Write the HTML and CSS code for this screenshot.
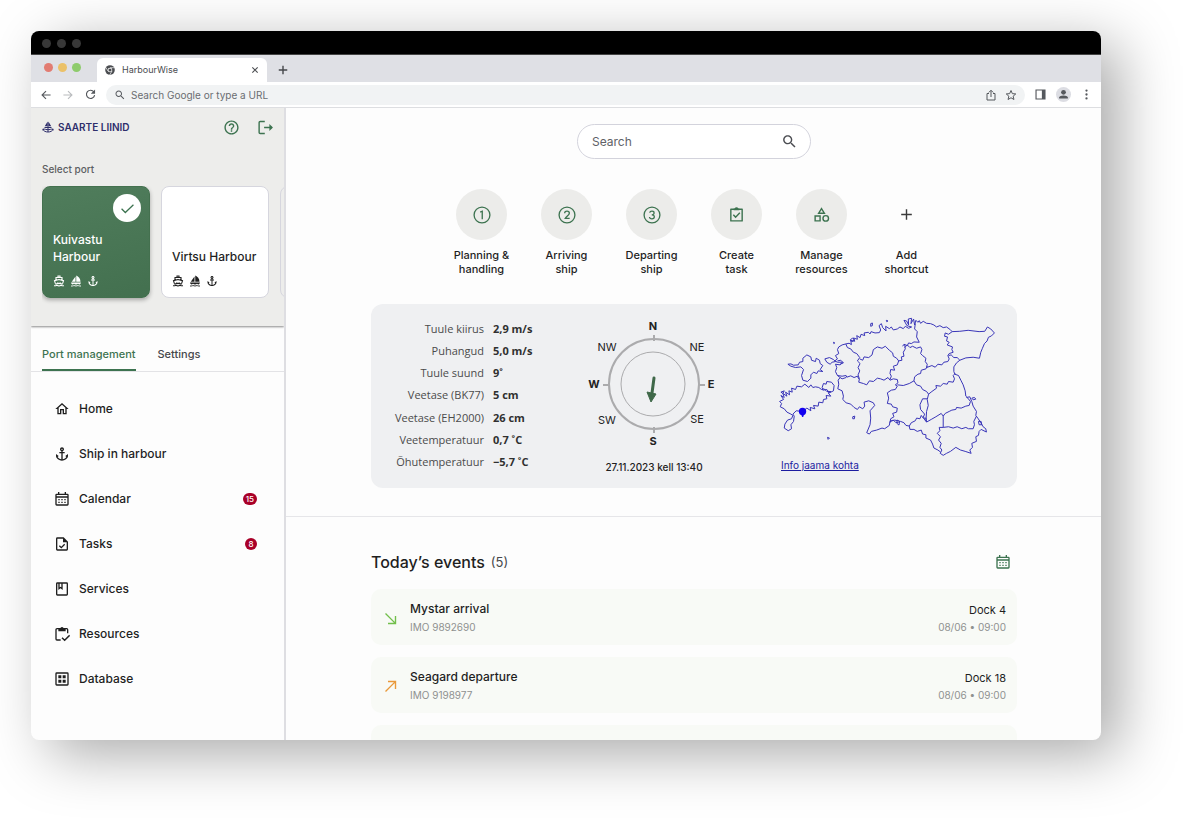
FILE: index.html
```html
<!DOCTYPE html>
<html lang="en">
<head>
<meta charset="utf-8">
<title>HarbourWise</title>
<link rel="stylesheet" href="styles.css">
</head>
<body>
<svg class="sprite" aria-hidden="true">
  <symbol id="i-home" viewBox="0 0 24 24"><path d="M12 5.69l5 4.5V18h-2v-6H9v6H7v-7.81l5-4.5M12 3L2 12h3v8h6v-6h2v6h6v-8h3L12 3z"/></symbol>
  <symbol id="i-anchor" viewBox="0 0 24 24"><path d="M17 15l1.55 1.55c-.96 1.69-3.33 3.04-5.55 3.37V11h3V9h-3V7.82C14.16 7.4 15 6.3 15 5c0-1.65-1.35-3-3-3S9 3.35 9 5c0 1.3.84 2.4 2 2.82V9H8v2h3v8.92c-2.22-.33-4.59-1.68-5.55-3.37L7 15l-4-3v3c0 3.88 4.92 7 9 7s9-3.12 9-7v-3l-4 3zM12 4c.55 0 1 .45 1 1s-.45 1-1 1-1-.45-1-1 .45-1 1-1z"/></symbol>
  <symbol id="i-calendar" viewBox="0 0 24 24"><path fill-rule="evenodd" d="M4 4h2V1.500h2V4h8V1.500h2V4h2a2 2 0 0 1 2 2v14a2 2 0 0 1-2 2H4a2 2 0 0 1-2-2V6a2 2 0 0 1 2-2zm0 6v10h16V10zm0-2.200h16V6H4zM6.500 12h2v2h-2zm4.500 0h2v2h-2zm4.500 0h2v2h-2zm-9 4h2v2h-2zm4.500 0h2v2h-2zm4.500 0h2v2h-2z"/></symbol>
  <symbol id="i-task" viewBox="0 0 24 24"><path fill-rule="evenodd" d="M14.500 2H5a2 2 0 0 0-2 2v16a2 2 0 0 0 2 2h14a2 2 0 0 0 2-2V8.500zm4.500 18H5V4h8.500v5.500H19z"/><path d="M8 14.500l3 3 5-5" fill="none" stroke="currentColor" stroke-width="2"/></symbol>
  <symbol id="i-book" viewBox="0 0 24 24"><path fill-rule="evenodd" d="M19 2H5a2 2 0 0 0-2 2v16a2 2 0 0 0 2 2h14a2 2 0 0 0 2-2V4a2 2 0 0 0-2-2zM5 4h1.500v9.500l3.250-2.500L13 13.500V4h6v16H5zm3.500 0H11v5.500L9.750 8.500 8.500 9.500z"/></symbol>
  <symbol id="i-resources" viewBox="0 0 24 24"><path d="M20.500 11V5.500a1.500 1.500 0 0 0-1.500-1.500H4.500A1.500 1.500 0 0 0 3 5.500v14A1.500 1.500 0 0 0 4.500 21H10" fill="none" stroke="currentColor" stroke-width="2"/><path d="M6.500 4h3a2.500 2.500 0 0 1 5 0h3v4h-11z"/><path d="M12 17.500l4 4 7.500-7.500" fill="none" stroke="currentColor" stroke-width="2.200"/></symbol>
  <symbol id="i-database" viewBox="0 0 24 24"><path fill-rule="evenodd" d="M4 2h16a2 2 0 0 1 2 2v16a2 2 0 0 1-2 2H4a2 2 0 0 1-2-2V4a2 2 0 0 1 2-2zm0 2v16h16V4zM6.500 6.500h4.500v4.500H6.500zm6.500 0h4.500v4.500H13zm-6.500 6.500h4.500v4.500H6.500zm6.500 0h4.500v4.500H13z"/></symbol>
  <symbol id="i-search" viewBox="0 0 24 24"><path d="M15.500 14h-.790l-.280-.270C15.410 12.590 16 11.110 16 9.500 16 5.910 13.090 3 9.500 3S3 5.910 3 9.500 5.910 16 9.500 16c1.610 0 3.090-.590 4.230-1.570l.270.280v.790l5 4.990L20.490 19l-4.990-5zm-6 0C7.010 14 5 11.990 5 9.500S7.010 5 9.500 5 14 7.010 14 9.500 11.990 14 9.500 14z"/></symbol>
  <symbol id="i-help" viewBox="0 0 24 24"><path d="M11 18h2v-2h-2v2zm1-16C6.480 2 2 6.480 2 12s4.480 10 10 10 10-4.480 10-10S17.520 2 12 2zm0 18c-4.410 0-8-3.590-8-8s3.590-8 8-8 8 3.590 8 8-3.590 8-8 8zm0-14c-2.210 0-4 1.790-4 4h2c0-1.100.9-2 2-2s2 .9 2 2c0 2-3 1.750-3 5h2c0-2.250 3-2.500 3-5 0-2.210-1.790-4-4-4z"/></symbol>
  <symbol id="i-logout" viewBox="0 0 24 24"><path d="M11 3.500H4.500A1.500 1.500 0 0 0 3 5v14a1.500 1.500 0 0 0 1.500 1.500H11M10 12h11" fill="none" stroke="currentColor" stroke-width="2"/><path d="M17.500 7l5 5-5 5z"/></symbol>
  <symbol id="i-boat" viewBox="0 0 24 24"><path d="M10 4V2h4v2M6 10V5h12v5M4.500 16L3 11.500 12 9l9 2.500-1.500 4.500M4 17c2.500 1.500 4.500.500 5.500-1 1.500 1.500 3.500 1.500 5 0 1 1.500 3 2.500 5.500 1M2 21.500c3 .500 5-.500 6-1 2 1.300 6 1.300 8 0 1 .500 3 1.500 6 1" fill="none" stroke="currentColor" stroke-width="2.200"/></symbol>
  <symbol id="i-sail" viewBox="0 0 24 24"><path d="M11 13.500V3L3.500 13.500zM12.500 1v12.500H21C21 7 17 3 12.500 1zM2 15h20c-.500 2-1.500 3.200-2.500 4-1.500 0-2.500-.700-3.500-1.500-2 1.700-6 1.700-8 0-1 .800-2 1.500-3.500 1.500C3.300 18 2.300 17 2 15z"/><path d="M2 22c3 .300 5-.500 6-1.200 2 1.500 6 1.500 8 0 1 .700 3 1.500 6 1.200" fill="none" stroke="currentColor" stroke-width="1.800"/></symbol>
  <symbol id="i-logo" viewBox="0 0 24 24"><path d="M11.200 1v9.500H5.500zM12.800 1v9.500h5.700z"/><path d="M12 3v19M5 13h14M5 15.500c1.500 2.500 12.500 2.500 14 0M2 16c1 8 19 8 20 0" fill="none" stroke="currentColor" stroke-width="2"/><path d="M.500 19l1.500-4.500 4 3zM23.500 19l-1.500-4.500-4 3z"/></symbol>
  <symbol id="i-check" viewBox="0 0 24 24"><path d="M2.500 12.500l6 6L21.500 6" fill="none" stroke="currentColor" stroke-width="2"/></symbol>
  <symbol id="i-plus" viewBox="0 0 24 24"><path d="M12 4.500v15M4.500 12h15" fill="none" stroke="currentColor" stroke-width="2"/></symbol>
  <symbol id="i-newtab" viewBox="0 0 24 24"><path d="M12 3.500v17M3.500 12h17" fill="none" stroke="currentColor" stroke-width="2.800"/></symbol>
  <symbol id="i-close" viewBox="0 0 24 24"><path d="M4 4l16 16M20 4L4 20" fill="none" stroke="currentColor" stroke-width="3.200"/></symbol>
  <symbol id="i-one" viewBox="0 0 24 24"><circle cx="12" cy="12" r="9.500" fill="none" stroke="currentColor" stroke-width="1.600"/><path d="M9.800 8.500L12.300 7.500V17" fill="none" stroke="currentColor" stroke-width="1.600"/></symbol>
  <symbol id="i-two" viewBox="0 0 24 24"><circle cx="12" cy="12" r="9.500" fill="none" stroke="currentColor" stroke-width="1.600"/><path d="M9.200 9.800C9.200 6.500 14.800 6.500 14.800 9.800 14.800 12 11 13.500 9.800 16.100H15.200" fill="none" stroke="currentColor" stroke-width="1.600"/></symbol>
  <symbol id="i-three" viewBox="0 0 24 24"><circle cx="12" cy="12" r="9.500" fill="none" stroke="currentColor" stroke-width="1.600"/><path d="M9.300 9.300C9.600 6.700 14.500 6.700 14.500 9.500c0 1.500-1.300 2.200-2.800 2.200 1.600 0 3.100.8 3.100 2.400 0 3.200-5.600 3.200-5.800.2" fill="none" stroke="currentColor" stroke-width="1.500"/></symbol>
  <symbol id="i-clipboard" viewBox="0 0 24 24"><path d="M4 4.500h16v16.500H4z" fill="none" stroke="currentColor" stroke-width="2" stroke-linejoin="round"/><path d="M8 3.500h1.500a2.600 2.600 0 0 1 5 0H16V6H8z"/><path d="M7.500 12.500l3.200 3.200 6-6.200" fill="none" stroke="currentColor" stroke-width="2"/></symbol>
  <symbol id="i-shapes" viewBox="0 0 24 24"><path d="M12 3.800L8 10.200h8zM3 14h7v7H3z" fill="none" stroke="currentColor" stroke-width="2"/><circle cx="18" cy="17.500" r="3.900" fill="none" stroke="currentColor" stroke-width="2"/></symbol>
  <symbol id="i-arriving" viewBox="0 0 24 24"><path d="M4 4l15 15M20 8v12H8" fill="none" stroke="currentColor" stroke-width="2.200"/></symbol>
  <symbol id="i-departing" viewBox="0 0 24 24"><path d="M4 20L19 5M8 4h12v12" fill="none" stroke="currentColor" stroke-width="2.200"/></symbol>
  <symbol id="i-back" viewBox="0 0 24 24"><path d="M23 12H3M12 2.500L2.500 12l9.500 9.500" fill="none" stroke="currentColor" stroke-width="2.600"/></symbol>
  <symbol id="i-forward" viewBox="0 0 24 24"><path d="M1 12h20M12 2.500l9.500 9.500-9.500 9.500" fill="none" stroke="currentColor" stroke-width="2.600"/></symbol>
  <symbol id="i-reload" viewBox="0 0 24 24"><path d="M19.500 6.500A9 9 0 1 0 21 13.500" fill="none" stroke="currentColor" stroke-width="2.500"/><path d="M22 1v9.500h-9.500z"/></symbol>
  <symbol id="i-share" viewBox="0 0 24 24"><path d="M8 9H4v13h16V9h-4M12 16V3M7.500 7L12 2.500 16.500 7" fill="none" stroke="currentColor" stroke-width="2"/></symbol>
  <symbol id="i-star" viewBox="0 0 24 24"><path d="M12 3l2.700 6.300 6.800.6-5.200 4.500 1.600 6.600-5.900-3.500L6.100 21l1.600-6.600L2.500 9.900l6.800-.6z" fill="none" stroke="currentColor" stroke-width="2"/></symbol>
  <symbol id="i-panel" viewBox="0 0 24 24"><path fill-rule="evenodd" d="M1 1h22v22H1zm2.500 2.500v17H15v-17z"/></symbol>
  <symbol id="i-user" viewBox="0 0 24 24"><circle cx="12" cy="8.500" r="3.800"/><path d="M5 18.500v-1.700c0-4.500 14-4.500 14 0v1.700z"/></symbol>
  <symbol id="i-more" viewBox="0 0 24 24"><circle cx="12" cy="3.500" r="2.500"/><circle cx="12" cy="12" r="2.500"/><circle cx="12" cy="20.500" r="2.500"/></symbol>
  <symbol id="i-chrome" viewBox="0 0 24 24"><circle cx="12" cy="12" r="11.500"/><path d="M12 6.500h10.500M7.200 14.700L2 5.700M16.800 14.700L11.500 23.500" stroke="#fff" stroke-width="1.600"/><circle cx="12" cy="12" r="5.500" fill="#fff"/><circle cx="12" cy="12" r="3.800"/></symbol>
</svg>

<div class="window">
  <div class="titlebar"><i></i><i></i><i></i></div>
  <div class="tabstrip">
    <div class="lights"><i class="red"></i><i class="yellow"></i><i class="green"></i></div>
    <div class="browser-tab">
      <svg class="s10"><use href="#i-chrome"/></svg>
      <span>HarbourWise</span>
      <button aria-label="Close tab"><svg class="s8"><use href="#i-close"/></svg></button>
    </div>
    <button class="new-tab" aria-label="New tab"><svg class="s12"><use href="#i-newtab"/></svg></button>
  </div>
  <div class="toolbar">
    <div class="history">
      <button aria-label="Back"><svg class="s10"><use href="#i-back"/></svg></button>
      <button class="dim" aria-label="Forward"><svg class="s10"><use href="#i-forward"/></svg></button>
      <button aria-label="Reload"><svg class="s11"><use href="#i-reload"/></svg></button>
    </div>
    <div class="address">
      <svg class="s12"><use href="#i-search"/></svg>
      <input type="text" aria-label="Address" placeholder="Search Google or type a URL">
      <button aria-label="Share"><svg class="s12"><use href="#i-share"/></svg></button>
      <button aria-label="Bookmark"><svg class="s12"><use href="#i-star"/></svg></button>
    </div>
    <button aria-label="Side panel"><svg class="s11"><use href="#i-panel"/></svg></button>
    <button class="profile" aria-label="Profile"><svg class="s15"><use href="#i-user"/></svg></button>
    <button aria-label="Menu"><svg class="s11"><use href="#i-more"/></svg></button>
  </div>

  <div class="app">
    <aside class="sidebar">
      <header class="ports">
        <div class="brand-row">
          <a class="brand" href="#"><svg class="s12"><use href="#i-logo"/></svg>SAARTE LIINID</a>
          <button aria-label="Help"><svg class="s17"><use href="#i-help"/></svg></button>
          <button aria-label="Log out"><svg class="s17"><use href="#i-logout"/></svg></button>
        </div>
        <p class="ports-label">Select port</p>
        <div class="port-list">
          <button class="port selected" aria-pressed="true">
            <span class="tick"><svg class="s15"><use href="#i-check"/></svg></span>
            <span class="port-name">Kuivastu Harbour</span>
            <span class="port-icons"><svg class="s12"><use href="#i-boat"/></svg><svg class="s12"><use href="#i-sail"/></svg><svg class="s12"><use href="#i-anchor"/></svg></span>
          </button>
          <button class="port" aria-pressed="false">
            <span class="port-name">Virtsu Harbour</span>
            <span class="port-icons"><svg class="s12"><use href="#i-boat"/></svg><svg class="s12"><use href="#i-sail"/></svg><svg class="s12"><use href="#i-anchor"/></svg></span>
          </button>
          <button class="port" aria-label="Next port"></button>
        </div>
      </header>
      <div class="tabs" role="tablist">
        <button class="tab active" role="tab" aria-selected="true">Port management</button>
        <button class="tab" role="tab" aria-selected="false">Settings</button>
      </div>
      <nav class="menu">
        <a href="#"><svg class="s16"><use href="#i-home"/></svg>Home</a>
        <a href="#"><svg class="s16"><use href="#i-anchor"/></svg>Ship in harbour</a>
        <a href="#"><svg class="s16"><use href="#i-calendar"/></svg>Calendar<span class="badge">15</span></a>
        <a href="#"><svg class="s16"><use href="#i-task"/></svg>Tasks<span class="badge">8</span></a>
        <a href="#"><svg class="s16"><use href="#i-book"/></svg>Services</a>
        <a href="#"><svg class="s16"><use href="#i-resources"/></svg>Resources</a>
        <a href="#"><svg class="s16"><use href="#i-database"/></svg>Database</a>
      </nav>
    </aside>

    <main class="main">
      <section class="overview">
        <form class="search">
          <input type="text" aria-label="Search" placeholder="Search">
          <button type="button" aria-label="Submit search"><svg class="s17"><use href="#i-search"/></svg></button>
        </form>
        <div class="shortcuts">
          <button><span class="disc"><svg class="s20"><use href="#i-one"/></svg></span>Planning &amp;<br>handling</button>
          <button><span class="disc"><svg class="s20"><use href="#i-two"/></svg></span>Arriving<br>ship</button>
          <button><span class="disc"><svg class="s20"><use href="#i-three"/></svg></span>Departing<br>ship</button>
          <button><span class="disc"><svg class="s17"><use href="#i-clipboard"/></svg></span>Create<br>task</button>
          <button><span class="disc"><svg class="s17"><use href="#i-shapes"/></svg></span>Manage<br>resources</button>
          <button><span class="disc plain"><svg class="s17"><use href="#i-plus"/></svg></span>Add<br>shortcut</button>
        </div>
        <div class="weather">
          <table class="readings">
            <tr><th scope="row">Tuule kiirus</th><td>2,9 m/s</td></tr>
            <tr><th scope="row">Puhangud</th><td>5,0 m/s</td></tr>
            <tr><th scope="row">Tuule suund</th><td>9˚</td></tr>
            <tr><th scope="row">Veetase (BK77)</th><td>5 cm</td></tr>
            <tr><th scope="row">Veetase (EH2000)</th><td>26 cm</td></tr>
            <tr><th scope="row">Veetemperatuur</th><td>0,7 ˚C</td></tr>
            <tr><th scope="row">Õhutemperatuur</th><td>−5,7 ˚C</td></tr>
          </table>
          <div class="wind">
            <svg class="compass" viewBox="0 0 140 130">
              <circle class="ring" cx="70" cy="66" r="45"/>
              <circle class="inner" cx="69" cy="66" r="32"/>
              <path class="marks" d="M70 17v6M70 109v6M19 67h6M115 67h6"/>
              <path class="needle" d="M70 60l-2 15"/>
              <path class="head" d="M63 74l9 2-5 8z"/>
              <g class="cardinal"><text x="69" y="12">N</text><text x="69" y="127">S</text><text x="10" y="70">W</text><text x="127" y="70">E</text></g>
              <g class="ordinal"><text x="23" y="33">NW</text><text x="113" y="33">NE</text><text x="23" y="106">SW</text><text x="113" y="105">SE</text></g>
            </svg>
            <time>27.11.2023 kell 13:40</time>
          </div>
          <div class="station">
            <svg class="map" viewBox="45 30 675 430" role="img" aria-label="Map of Estonia">
              <g class="borders">
                <path d="M257 117L267 115 274 119 272 106 284 109 280 99 292 103 290 92 300 98 303 88 314 92 312 84 325 82 330 87 333 80 345 84 358 83 362 75 357 62 364 56 368 68 378 78 377 64 388 71 394 66 400 75 412 72 420 66 430 71 436 64 446 70 455 66 441 62 432 46 440 48 446 60 445 42 455 40 453 56 461 42 464 60 468 46 474 52 478 47 482 55 490 49 500 55 512 56 522 60 530 66 540 62 550 68 560 66 570 73 577 80"/>
                <path d="M466 56L464 72 472 80 470 96 478 112 462 111 454 116 446 114 442 122 432 118 428 124"/>
                <path d="M577 80L600 79 625 76 658 80 675 79 683 66 693 72 704 84 695 93 686 97 682 108 674 116 668 130 663 142 659 160 640 157 618 159 600 166"/>
                <path d="M577 80L566 88 556 84 554 94 563 96 560 108 568 112 562 120 578 126 576 134 580 142 568 146 564 152 568 162 564 170 552 172 546 180 534 178 526 187 516 182 500 188 502 178 496 170 498 160 488 152 482 146 486 134 482 126 470 130 458 124 450 128 442 120 434 128"/>
                <path d="M566 152L574 150 582 158 592 158 600 166 590 174 582 186 582 200 585 208 596 212 604 228 610 240 616 258 618 274 624 280"/>
                <path d="M257 117L246 120 236 126 232 134 236 146 226 152 232 162 224 168 232 172 247 172 240 180 226 178 230 188 226 200 232 212 246 214 258 212 260 217 272 213 282 218 292 214 296 222"/>
                <path d="M257 117L262 128 272 132 280 142 290 146 299 158 292 168 300 176 294 188 299 198 294 210 298 222"/>
                <path d="M299 162L308 166 312 156 326 158 336 150 340 134 352 126 366 130 376 124 388 136 398 144 400 154 410 160 416 168 412 180 400 184 404 196 392 194 390 206 394 214 390 224"/>
                <path d="M416 168L426 166 424 156 432 154 430 142 436 132 434 118"/>
                <path d="M298 222L296 232 310 236 320 240 328 228 340 230 352 220 362 222 372 226 384 218 390 226 400 222 412 224 414 234 406 240 412 244"/>
                <path d="M412 240L430 242 448 236 462 228 464 216 474 208 482 206 484 196 498 192 502 184"/>
                <path d="M462 228L470 240 482 244 488 254 500 260 506 268 516 260 530 250 528 242 542 244 550 236 562 238 566 230 580 232 584 222 580 212 586 206"/>
                <path d="M412 244L406 254 394 256 382 264 386 280 382 296 394 298 398 306 412 310 410 322 398 326 402 336 392 342 390 354"/>
                <path d="M240 218L234 226 236 238 233 252 246 258 250 274 248 284 258 294 272 298 282 308 292 314 298 306 308 312 314 304 312 292 326 288 340 294 344 302 330 318 332 340 330 360 320 384 328 388 334 380 350 376 366 370 374 372 388 362 390 350 404 346 414 348"/>
                <path d="M240 218L232 212M258 218L246 222 240 218"/>
                <path d="M506 268L502 284 505 302 500 320 498 350 490 338 494 328 482 314 480 300 488 282 502 282"/>
                <path d="M390 350L400 346 408 354 422 350 432 354 438 362 448 364 450 374 462 374 472 380 484 376 488 388 498 390 498 400 512 406 518 418 522 430 534 436 542 442"/>
                <path d="M448 364L454 354 466 348 470 340 480 342 484 332 490 340 498 340 500 352 514 344 528 336 544 326 550 334 556 326 568 320 576 316 588 314 590 308 604 310 618 304 628 302 632 290 624 280"/>
                <path d="M550 334L550 368 538 368 540 378 532 386 542 396 536 406 544 416 540 428 546 436 541 446 550 452 560 446 572 440 588 428 602 436 616 440 634 446 630 436 638 428 636 416 650 410 648 396 656 392 658 380 664 374 680 382 678 372 670 366 662 352 654 340 648 332 650 320 640 304 636 290 630 276 620 278"/>
                <path d="M550 368L566 366 580 370 592 366 606 372 618 368 626 372 640 372 644 360 642 350 650 334"/>
                <path d="M656 350L664 350 666 360 658 360zM636 280L644 278 648 283 640 285zM411 346L419 349 417 361 411 356z"/>
                <path d="M83 178L92 177 100 181 114 180 118 172 128 170 128 160 140 150 152 156 154 166 166 170 168 160 178 166 180 176 188 182 180 194 188 200 174 198 170 206 160 202 152 210 152 220 142 230 128 226 124 212 130 194 122 186 106 188 92 184z"/>
                <path d="M194 162L208 158 220 164 226 170 216 172 210 178 200 172zM186 248L190 236 198 238 200 230 214 232 222 242 220 258 208 264 200 254 188 256zM232 168L242 166 250 174 240 178"/>
                <path d="M62 262L72 258 68 266 72 278 62 272 70 284 58 290 64 296 60 306 72 312 80 322 92 328 98 332 94 342 82 346 74 358 72 370 84 378 94 372 92 360 100 350 102 334 98 328 108 318 127 320 140 310 152 318 150 308 164 312 160 302 174 304 176 292 188 294 190 284 200 282 198 272 212 274 204 264 212 260 200 260 192 252 184 254 176 248 166 246 158 248 152 240 146 248 134 238 124 246 110 244 106 254 94 250 96 262 86 258 88 270 76 262 80 274z"/>
                <path d="M332 56L337 54 337 62 332 64zM379 46L384 48 380 50zM220 112L224 114 221 116zM271 104L277 100 283 104 278 110 272 108zM278 336L284 334 283 342 278 342zM202 398L208 400 204 404z"/>
              </g>
              <circle class="pin" cx="127" cy="320" r="11"/><path class="pin" d="M121 325h12l-4 12h-3z"/>
            </svg>
            <a href="#">Info jaama kohta</a>
          </div>
        </div>
      </section>

      <section class="events">
        <div class="events-head">
          <h1>Today’s events <span>(5)</span></h1>
          <button aria-label="Open calendar"><svg class="s16"><use href="#i-calendar"/></svg></button>
        </div>
        <article class="event">
          <svg class="s15 arriving"><use href="#i-arriving"/></svg>
          <div><h2>Mystar arrival</h2><p>IMO 9892690</p></div>
          <div class="berth"><strong>Dock 4</strong><p>08/06 • 09:00</p></div>
        </article>
        <article class="event">
          <svg class="s15 departing"><use href="#i-departing"/></svg>
          <div><h2>Seagard departure</h2><p>IMO 9198977</p></div>
          <div class="berth"><strong>Dock 18</strong><p>08/06 • 09:00</p></div>
        </article>
        <article class="event"></article>
      </section>
    </main>
  </div>
</div>
</body>
</html>
```

FILE: styles.css
```css
* { box-sizing: border-box; margin: 0; padding: 0; }

body {
  height: 100vh;
  padding: 31px 91px 81px 31px;
  background: #fff;
  color: #1f1f1f;
  font: 500 12px/16px Inter, "Liberation Sans", sans-serif;
  overflow: hidden;
}

button { display: flex; align-items: center; border: 0; background: none; color: inherit; font: inherit; cursor: pointer; }
input { border: 0; outline: 0; background: none; color: inherit; font: inherit; min-width: 0; flex: 1; }
a { color: inherit; text-decoration: none; }
svg { display: block; flex: none; fill: currentColor; }

.sprite { display: none; }
.s8 { width: 8px; height: 8px; }
.s10 { width: 10px; height: 10px; }
.s11 { width: 11px; height: 11px; }
.s12 { width: 12px; height: 12px; }
.s15 { width: 15px; height: 15px; }
.s16 { width: 16px; height: 16px; }
.s17 { width: 17px; height: 17px; }
.s20 { width: 20px; height: 20px; }

/* Browser frame */
.window {
  display: flex;
  flex-direction: column;
  height: 100%;
  border-radius: 8px;
  overflow: hidden;
  background: #fdfdfd;
  box-shadow: 18px 14px 58px rgba(0, 0, 0, .34);
}
.titlebar { display: flex; align-items: center; gap: 6px; height: 24px; padding: 2px 11px 0; background: #000; border-bottom: 1px solid #444; }
.titlebar i { width: 9px; height: 9px; border-radius: 50%; background: #383838; }
.tabstrip { display: flex; align-items: flex-end; height: 27px; padding-left: 13px; background: #dfe0e5; }
.lights { display: flex; gap: 5px; width: 53px; height: 19px; }
.lights i { width: 9px; height: 9px; border-radius: 50%; }
.red { background: #e27c72; }
.yellow { background: #ebc168; }
.green { background: #8ecb6c; }
.browser-tab { display: flex; align-items: center; gap: 7px; width: 170px; height: 24px; padding: 0 8px; border-radius: 6px 6px 0 0; background: #fff; color: #4a4c50; font: 400 9px/12px Inter, sans-serif; }
.browser-tab span { flex: 1; }
.new-tab { height: 24px; padding: 0 10px; color: #45474b; }
.toolbar { display: flex; align-items: center; gap: 10px; height: 26px; padding: 0 9px 0 10px; background: #fff; border-bottom: 1px solid #dddee1; color: #55585d; }
.history { display: flex; gap: 12px; }
.dim { color: #b9bbbe; }
.address { display: flex; align-items: center; flex: 1; gap: 8px; height: 20px; padding: 0 8px; border-radius: 10px; background: #f1f3f4; font: 400 10px/14px Inter, sans-serif; }
.address > svg { margin-right: -3px; }
.address input::placeholder { color: #6a6d71; opacity: 1; }
.profile { border-radius: 50%; background: #dcdde3; }

.app { display: flex; flex: 1; min-height: 0; }

/* Sidebar */
.sidebar { flex: none; width: 255px; border-right: 2px solid #dedee2; overflow: hidden; }
.ports { height: 218px; padding: 10px 0 0 11px; background: #ededeb; box-shadow: 0 1px 2px rgba(0, 0, 0, .45); overflow: hidden; }
.brand-row { display: flex; align-items: center; gap: 17px; height: 18px; padding-right: 10px; color: #3d7350; }
.brand { display: flex; align-items: center; flex: 1; gap: 4px; color: #2f2f6b; font: 600 10px/14px Inter, sans-serif; }
.ports-label { margin: 25px 0 9px; color: #5c5e62; font-size: 10px; }
.port-list { display: flex; gap: 11px; padding-bottom: 12px; overflow: hidden; }
.port { position: relative; display: flex; flex: none; flex-direction: column; align-items: flex-start; justify-content: flex-end; gap: 10px; width: 108px; height: 112px; padding: 10px; border: 1px solid #d6d6de; border-radius: 8px; background: #fff; text-align: left; }
.port:last-child { background: #ededeb; }
.port.selected { border: 1px solid #44714f; background: linear-gradient(165deg, #507d5c, #43704f); color: #fff; box-shadow: 0 2px 4px rgba(0, 0, 0, .3); }
.port-name { line-height: 17px; }
.port-icons { display: flex; gap: 5px; }
.tick { position: absolute; top: 7px; right: 8px; display: grid; place-items: center; width: 28px; height: 28px; border-radius: 50%; background: #fff; color: #3d7350; }
.tabs { display: flex; gap: 22px; height: 46px; padding: 0 11px; border-bottom: 1px solid #e3e3e6; color: #46484b; font-size: 11px; }
.tab { padding-top: 13px; border-bottom: 2px solid transparent; }
.tab.active { border-color: #3d7350; color: #3d7350; }
.menu { padding-top: 14px; }
.menu a { display: flex; align-items: center; gap: 9px; height: 45px; padding: 0 27px 0 23px; }
.badge { margin-left: auto; min-width: 12px; padding: 0 3px; border-radius: 6px; background: #a90028; color: #fff; font-size: 8px; line-height: 12px; text-align: center; }

/* Main column */
.main { flex: 1; min-width: 0; overflow: hidden; }
.overview { padding: 16px 84px 28px 85px; border-bottom: 1px solid #e6e6e9; }
.search { display: flex; align-items: center; width: 234px; height: 35px; margin: 0 auto 30px; padding: 0 12px 0 14px; border: 1px solid #d3d3dc; border-radius: 18px; background: #fff; color: #4b4d52; font-size: 12px; font-weight: 400; }
.search input::placeholder { color: #606267; opacity: 1; }
.shortcuts { display: flex; justify-content: center; margin-bottom: 28px; font-size: 11px; line-height: 14px; }
.shortcuts button { flex-direction: column; width: 85px; text-align: center; }
.disc { display: grid; place-items: center; width: 51px; height: 51px; margin-bottom: 8px; border-radius: 50%; background: #ececea; color: #3d7350; }
.disc.plain { background: none; color: #3a3a3a; }
.weather { display: grid; grid-template-columns: 183px 200px 1fr; padding: 14px 0 13px; border-radius: 12px; background: #eff0f2; }
.readings { width: 100%; height: 155px; border-collapse: collapse; color: #4b4b4b; font: 400 11px/22px "Open Sans", sans-serif; }
.readings th { width: 113px; font-weight: 400; text-align: right; }
.readings td { padding-left: 9px; color: #303030; font-weight: 700; white-space: nowrap; }
.wind { display: flex; flex-direction: column; align-items: center; gap: 11px; font: 500 10px/16px Inter, sans-serif; }
.compass { width: 140px; height: 130px; font: 400 11px Inter, sans-serif; }
.ring { fill: none; stroke: #ababad; stroke-width: 2; }
.inner { fill: none; stroke: #ababad; }
.marks { stroke: #ababad; stroke-width: 2; }
.needle { stroke: #3f6849; stroke-width: 3; stroke-linecap: round; }
.head { fill: #3f6849; stroke: #3f6849; stroke-linejoin: round; }
.compass text { fill: #222; text-anchor: middle; }
.cardinal { font-weight: 700; }
.station { display: flex; flex-direction: column; align-items: flex-start; padding-left: 21px; }
.map { width: 225px; height: 143px; margin-top: -3px; }
.borders { fill: none; stroke: #3834b8; stroke-width: 3; stroke-linejoin: round; }
.pin { fill: #1200f0; }
.station a { margin-left: 6px; color: #1c1ca0; font: 400 10px/14px Inter, sans-serif; text-decoration: underline; }

/* Events */
.events { padding: 33px 84px 0 85px; }
.events-head { display: flex; align-items: center; justify-content: space-between; height: 24px; margin-bottom: 15px; padding-right: 6px; }
.events-head h1 { display: flex; gap: 6px; font-size: 16px; font-weight: 500; line-height: 24px; }
.events-head h1 span { color: #46484b; font-size: 13px; font-weight: 400; }
.events-head button { color: #3d7350; }
.event { display: flex; align-items: center; gap: 12px; height: 56px; margin-bottom: 12px; padding: 2px 11px 0 12px; border-radius: 10px; background: #f8faf6; }
.event h2 { margin-bottom: 2px; font-size: 12px; font-weight: 500; line-height: 16px; }
.event p { color: #8f9190; font-size: 10px; font-weight: 400; line-height: 16px; }
.berth { margin-left: auto; text-align: right; }
.berth strong { display: block; font-size: 11px; font-weight: 400; line-height: 17px; }
.arriving { color: #72bf4b; }
.departing { color: #e9993a; }
```
